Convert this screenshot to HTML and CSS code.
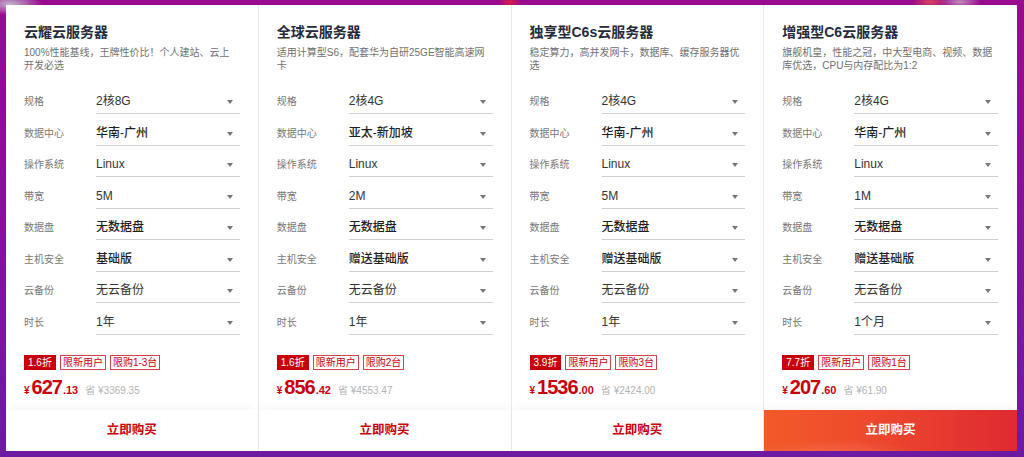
FILE: index.html
```html
<!DOCTYPE html>
<html lang="zh-CN">
<head>
<meta charset="utf-8">
<title>云服务器</title>
<link rel="stylesheet" href="styles.css">
</head>
<body>
<div class="stage">
  <div class="cards">
    <div class="card">
      <div class="title">云耀云服务器</div>
      <div class="desc">100%性能基线，王牌性价比！个人建站、云上<br>开发必选</div>
      <div class="rows">
        <div class="row"><span class="label">规格</span><span class="select">2核8G</span></div>
        <div class="row"><span class="label">数据中心</span><span class="select strong">华南-广州</span></div>
        <div class="row"><span class="label">操作系统</span><span class="select">Linux</span></div>
        <div class="row"><span class="label">带宽</span><span class="select">5M</span></div>
        <div class="row"><span class="label">数据盘</span><span class="select strong">无数据盘</span></div>
        <div class="row"><span class="label">主机安全</span><span class="select strong">基础版</span></div>
        <div class="row"><span class="label">云备份</span><span class="select">无云备份</span></div>
        <div class="row"><span class="label">时长</span><span class="select">1年</span></div>
      </div>
      <div class="tags"><span class="tag solid">1.6折</span><span class="tag">限新用户</span><span class="tag">限购1-3台</span></div>
      <div class="price"><span class="yen">¥</span><span class="int">627</span><span class="dec">.13</span><span class="save">省 ¥3369.35</span></div>
      <div class="buy">立即购买</div>
    </div>
    <div class="card">
      <div class="title">全球云服务器</div>
      <div class="desc">适用计算型S6，配套华为自研25GE智能高速网<br>卡</div>
      <div class="rows">
        <div class="row"><span class="label">规格</span><span class="select">2核4G</span></div>
        <div class="row"><span class="label">数据中心</span><span class="select strong">亚太-新加坡</span></div>
        <div class="row"><span class="label">操作系统</span><span class="select">Linux</span></div>
        <div class="row"><span class="label">带宽</span><span class="select">2M</span></div>
        <div class="row"><span class="label">数据盘</span><span class="select strong">无数据盘</span></div>
        <div class="row"><span class="label">主机安全</span><span class="select strong">赠送基础版</span></div>
        <div class="row"><span class="label">云备份</span><span class="select">无云备份</span></div>
        <div class="row"><span class="label">时长</span><span class="select">1年</span></div>
      </div>
      <div class="tags"><span class="tag solid">1.6折</span><span class="tag">限新用户</span><span class="tag">限购2台</span></div>
      <div class="price"><span class="yen">¥</span><span class="int">856</span><span class="dec">.42</span><span class="save">省 ¥4553.47</span></div>
      <div class="buy">立即购买</div>
    </div>
    <div class="card">
      <div class="title">独享型C6s云服务器</div>
      <div class="desc">稳定算力，高并发网卡，数据库、缓存服务器优<br>选</div>
      <div class="rows">
        <div class="row"><span class="label">规格</span><span class="select">2核4G</span></div>
        <div class="row"><span class="label">数据中心</span><span class="select strong">华南-广州</span></div>
        <div class="row"><span class="label">操作系统</span><span class="select">Linux</span></div>
        <div class="row"><span class="label">带宽</span><span class="select">5M</span></div>
        <div class="row"><span class="label">数据盘</span><span class="select strong">无数据盘</span></div>
        <div class="row"><span class="label">主机安全</span><span class="select strong">赠送基础版</span></div>
        <div class="row"><span class="label">云备份</span><span class="select">无云备份</span></div>
        <div class="row"><span class="label">时长</span><span class="select">1年</span></div>
      </div>
      <div class="tags"><span class="tag solid">3.9折</span><span class="tag">限新用户</span><span class="tag">限购3台</span></div>
      <div class="price"><span class="yen">¥</span><span class="int">1536</span><span class="dec">.00</span><span class="save">省 ¥2424.00</span></div>
      <div class="buy">立即购买</div>
    </div>
    <div class="card">
      <div class="title">增强型C6云服务器</div>
      <div class="desc">旗舰机皇，性能之冠，中大型电商、视频、数据<br>库优选，CPU与内存配比为1:2</div>
      <div class="rows">
        <div class="row"><span class="label">规格</span><span class="select">2核4G</span></div>
        <div class="row"><span class="label">数据中心</span><span class="select strong">华南-广州</span></div>
        <div class="row"><span class="label">操作系统</span><span class="select">Linux</span></div>
        <div class="row"><span class="label">带宽</span><span class="select">1M</span></div>
        <div class="row"><span class="label">数据盘</span><span class="select strong">无数据盘</span></div>
        <div class="row"><span class="label">主机安全</span><span class="select strong">赠送基础版</span></div>
        <div class="row"><span class="label">云备份</span><span class="select">无云备份</span></div>
        <div class="row"><span class="label">时长</span><span class="select">1个月</span></div>
      </div>
      <div class="tags"><span class="tag solid">7.7折</span><span class="tag">限新用户</span><span class="tag">限购1台</span></div>
      <div class="price"><span class="yen">¥</span><span class="int">207</span><span class="dec">.60</span><span class="save">省 ¥61.90</span></div>
      <div class="buy active">立即购买</div>
    </div>
  </div>
</div>
</body>
</html>
```

FILE: styles.css
```css
html, body {
  margin: 0;
  padding: 0;
}

body {
  font-family: "Liberation Sans", "Noto Sans CJK SC", sans-serif;
  color: #333;
}

.stage {
  box-sizing: border-box;
  width: 1024px;
  height: 457px;
  padding: 5px 7px 6px 6px;
  background:
    radial-gradient(ellipse 40px 14px at 10px 4px, rgba(200, 200, 210, 0.9), transparent 80%),
    radial-gradient(ellipse 14px 8px at 510px 2px, rgba(230, 30, 60, 0.9), transparent 80%),
    radial-gradient(ellipse 22px 8px at 930px 2px, rgba(235, 80, 80, 0.85), transparent 80%),
    radial-gradient(ellipse 26px 8px at 960px 2px, rgba(210, 200, 210, 0.7), transparent 80%),
    linear-gradient(180deg, #980b8d 0%, #85129a 45%, #6d1aa3 100%);
}

.cards {
  display: grid;
  grid-template-columns: repeat(4, 1fr);
  height: 446px;
  background: #fff;
}

.card {
  display: flex;
  flex-direction: column;
  padding: 17px 0 0 0;
  border-right: 1px solid #ebebeb;
  min-width: 0;
}

.card:last-child {
  border-right: none;
}

.title,
.desc,
.rows,
.tags,
.price {
  margin-left: 18px;
  margin-right: 18px;
}

.card:last-child .title,
.card:last-child .desc,
.card:last-child .rows,
.card:last-child .tags,
.card:last-child .price {
  margin-right: 19px;
}

.title {
  font-size: 14px;
  font-weight: bold;
  line-height: 20px;
  color: #252b3a;
}

.desc {
  margin-top: 3.5px;
  font-size: 10px;
  line-height: 13px;
  color: #6f6f6f;
  white-space: nowrap;
}

.rows {
  margin-top: 11px;
}

.row {
  display: flex;
  align-items: flex-end;
  height: 31.5px;
}

.label {
  width: 72px;
  flex: none;
  font-size: 10px;
  line-height: 25px;
  color: #777;
}

.select {
  position: relative;
  flex: 1;
  font-size: 12px;
  line-height: 24px;
  color: #333;
  border-bottom: 1px solid #cfcfcf;
}

.select.strong {
  color: #1f1f1f;
  font-weight: 500;
}

.select::after {
  content: "";
  position: absolute;
  right: 7px;
  top: 11px;
  border-left: 3px solid transparent;
  border-right: 3px solid transparent;
  border-top: 4px solid #777;
}

.tags {
  display: flex;
  gap: 4px;
  margin-top: 20.5px;
}

.tag {
  box-sizing: border-box;
  height: 15px;
  padding: 0 2px;
  border: 1px solid #d0434b;
  font-size: 10px;
  line-height: 13px;
  color: #c7000b;
  white-space: nowrap;
}

.tag.solid {
  background: #c7000b;
  border-color: #c7000b;
  color: #fff;
  padding: 0 3px;
}

.price {
  display: flex;
  align-items: baseline;
  height: 24px;
  margin-top: 5px;
  color: #c7000b;
  font-weight: bold;
}

.yen {
  font-size: 10px;
  line-height: 1;
  margin-right: 2px;
}

.int {
  font-size: 20px;
  line-height: 24px;
  letter-spacing: -1px;
}

.dec {
  font-size: 11px;
  line-height: 1;
  margin-left: 1px;
}

.save {
  margin-left: 7px;
  font-size: 10px;
  line-height: 1;
  font-weight: normal;
  color: #b3b3b3;
}

.buy {
  margin-top: auto;
  height: 41px;
  line-height: 41px;
  text-align: center;
  font-size: 12.5px;
  font-weight: bold;
  color: #c7000b;
  background: #fff;
  box-shadow: 0 -5px 8px -3px rgba(0, 0, 0, 0.05);
}

.buy.active {
  color: #fff;
  background:
    radial-gradient(ellipse 130px 30px at 70px 52px, rgba(255, 170, 150, 0.35), transparent 75%),
    linear-gradient(90deg, #f25a29 0%, #ee4a2d 40%, #e63a2f 70%, #de2a30 100%);
}
```
